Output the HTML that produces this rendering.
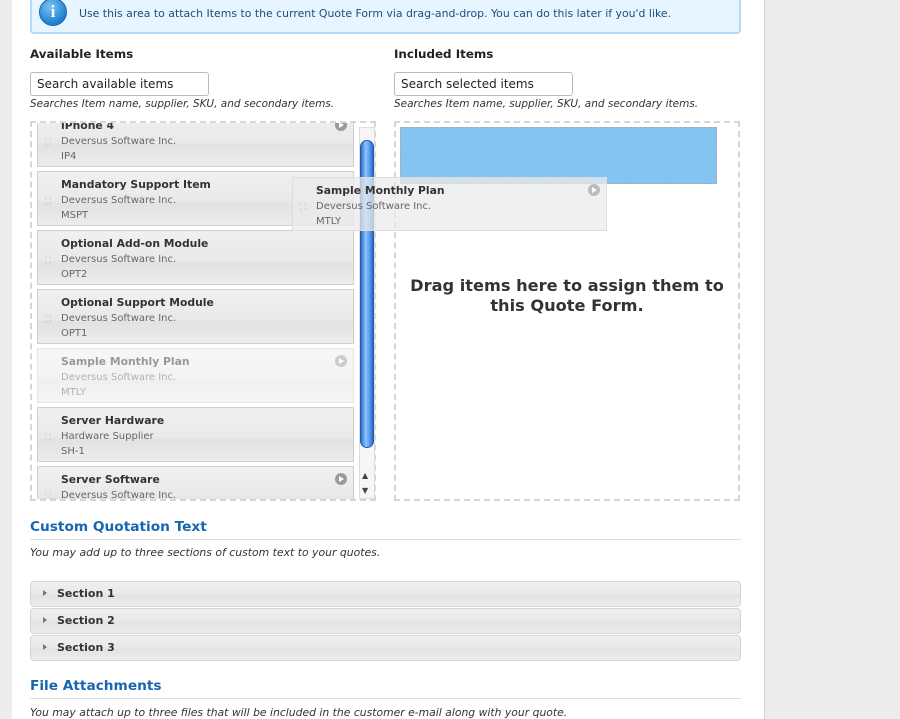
<!DOCTYPE html>
<html><head><meta charset="utf-8"><style>
*{margin:0;padding:0;box-sizing:border-box}
body{width:900px;height:719px;overflow:hidden;background:#ececec;font-family:"DejaVu Sans","Liberation Sans",sans-serif;color:#333;position:relative}
.page{position:absolute;left:12px;top:0;width:753px;height:719px;background:#fff;border-right:1px solid #d4d4d4}
.a{position:absolute}
.info{left:30px;top:-10px;width:711px;height:44px;background:#e6f5ff;border:2px solid #b0dcfa;border-radius:4px}
.info span{position:absolute;left:47px;top:15px;font-size:10.9px;color:#1e4e7e;white-space:nowrap}
.ic{left:39px;top:-2px;width:28px;height:28px;border-radius:50%;background:radial-gradient(circle at 40% 30%,#7cc4f4,#1f7fd0 70%);border:1px solid #1a65a8;color:#fff;font:bold 17px "Liberation Serif",serif;text-align:center;line-height:26px}
h3{position:absolute;font-size:11.9px;font-weight:bold;color:#222}
.srch{width:179px;height:24px;border:1px solid #bbb;border-radius:3px;font-size:12px;padding:4px 0 0 6px;color:#222}
.hint{font-size:10.5px;font-style:italic;color:#333;white-space:nowrap}
.box{border:2px dashed #d6d6d6}
.list{left:30px;top:121px;width:346px;height:380px;overflow:hidden}
.item{position:absolute;left:5px;width:317px;height:55px;border:1px solid #cfcfcf;background:linear-gradient(#f0f0f0,#e9e9e9 55%,#e2e2e2 60%,#ececec)}
.item b{position:absolute;left:23px;top:6px;font-size:10.8px;color:#333;white-space:nowrap}
.item i{position:absolute;left:23px;top:23px;font-style:normal;font-size:10px;color:#666;white-space:nowrap}
.item u{position:absolute;left:23px;top:38px;text-decoration:none;font-size:10px;color:#666}
.item s{position:absolute;left:7px;top:25px;text-decoration:none;font-size:9px;color:#bbb}
.arr{position:absolute;right:6px;top:6px;width:12px;height:12px;border-radius:50%;background:#9a9a9a}
.arr:after{content:"";position:absolute;left:4px;top:3px;border-left:5px solid #fff;border-top:3px solid transparent;border-bottom:3px solid transparent}
.fade{opacity:.5}
.sb{left:359px;top:127px;width:16px;height:372px;border:1px solid #ddd;background:#f6f6f6}
.thumb{left:360px;top:140px;width:14px;height:308px;border-radius:7px;background:linear-gradient(90deg,#2c6fc9,#8ec3ff 40%,#5a9cef 70%,#2b67c2);border:1px solid #245aa8}
.inc{left:394px;top:121px;width:346px;height:380px}
.ph{left:400px;top:127px;width:317px;height:57px;background:#83c4f2;border:1px dashed #aaa}
.drop{left:394px;top:276px;width:346px;text-align:center;font-size:16.2px;font-weight:bold;color:#333;line-height:20px;white-space:nowrap}
.drag{left:292px;top:177px;width:315px;height:54px;background:rgba(235,235,235,.75);border:1px solid #ddd}
h2{position:absolute;left:30px;font-size:13.7px;font-weight:bold;color:#1766b2}
.hr{left:30px;width:711px;height:1px;background:#ddd}
.sec{left:30px;width:711px;height:26px;border:1px solid #d4d4d4;border-radius:4px;background:linear-gradient(#efefef,#e9e9e9 50%,#e3e3e3 55%,#ececec)}
.sec b{position:absolute;left:26px;top:5px;font-size:11px;color:#333}
.sec:before{content:"";position:absolute;left:12px;top:8px;border-left:4px solid #777;border-top:3.5px solid transparent;border-bottom:3.5px solid transparent}
</style></head><body>
<div class="page"></div>
<div class="a info"><span>Use this area to attach Items to the current Quote Form via drag-and-drop. You can do this later if you'd like.</span></div>
<div class="a ic">i</div>
<h3 style="left:30px;top:47px">Available Items</h3>
<h3 style="left:394px;top:47px">Included Items</h3>
<div class="a srch" style="left:30px;top:72px">Search available items</div>
<div class="a srch" style="left:394px;top:72px">Search selected items</div>
<div class="a hint" style="left:30px;top:98px">Searches Item name, supplier, SKU, and secondary items.</div>
<div class="a hint" style="left:394px;top:98px">Searches Item name, supplier, SKU, and secondary items.</div>
<div class="a box list">
<div class="item" style="top:-11px"><b>iPhone 4</b><s>⛶</s><i>Deversus Software Inc.</i><u>IP4</u><span class="arr"></span></div>
<div class="item" style="top:48px"><b>Mandatory Support Item</b><s>⛶</s><i>Deversus Software Inc.</i><u>MSPT</u></div>
<div class="item" style="top:107px"><b>Optional Add-on Module</b><s>⛶</s><i>Deversus Software Inc.</i><u>OPT2</u></div>
<div class="item" style="top:166px"><b>Optional Support Module</b><s>⛶</s><i>Deversus Software Inc.</i><u>OPT1</u></div>
<div class="item fade" style="top:225px"><b>Sample Monthly Plan</b><s>⛶</s><i>Deversus Software Inc.</i><u>MTLY</u><span class="arr"></span></div>
<div class="item" style="top:284px"><b>Server Hardware</b><s>⛶</s><i>Hardware Supplier</i><u>SH-1</u></div>
<div class="item" style="top:343px"><b>Server Software</b><s>⛶</s><i>Deversus Software Inc.</i><u>SS</u><span class="arr"></span></div>
</div>
<div class="a sb"></div>
<div class="a thumb"></div>
<div class="a" style="left:362px;top:471px;font-size:8px;color:#444">▲</div>
<div class="a" style="left:362px;top:486px;font-size:8px;color:#444">▼</div>
<div class="a box inc"></div>
<div class="a ph"></div>
<div class="a drop">Drag items here to assign them to<br>this Quote Form.</div>
<div class="a drag"><div class="item" style="left:0;top:0;width:313px;height:52px;border:0;background:transparent"><b>Sample Monthly Plan</b><s>⛶</s><i>Deversus Software Inc.</i><u>MTLY</u><span class="arr" style="opacity:.6"></span></div></div>
<h2 style="top:519px">Custom Quotation Text</h2>
<div class="a hr" style="top:539px"></div>
<div class="a hint" style="left:30px;top:546px;font-size:10.85px">You may add up to three sections of custom text to your quotes.</div>
<div class="a sec" style="top:581px"><b>Section 1</b></div>
<div class="a sec" style="top:608px"><b>Section 2</b></div>
<div class="a sec" style="top:635px"><b>Section 3</b></div>
<h2 style="top:678px">File Attachments</h2>
<div class="a hr" style="top:698px"></div>
<div class="a hint" style="left:30px;top:706px;font-size:10.8px">You may attach up to three files that will be included in the customer e-mail along with your quote.</div>
</body></html>
